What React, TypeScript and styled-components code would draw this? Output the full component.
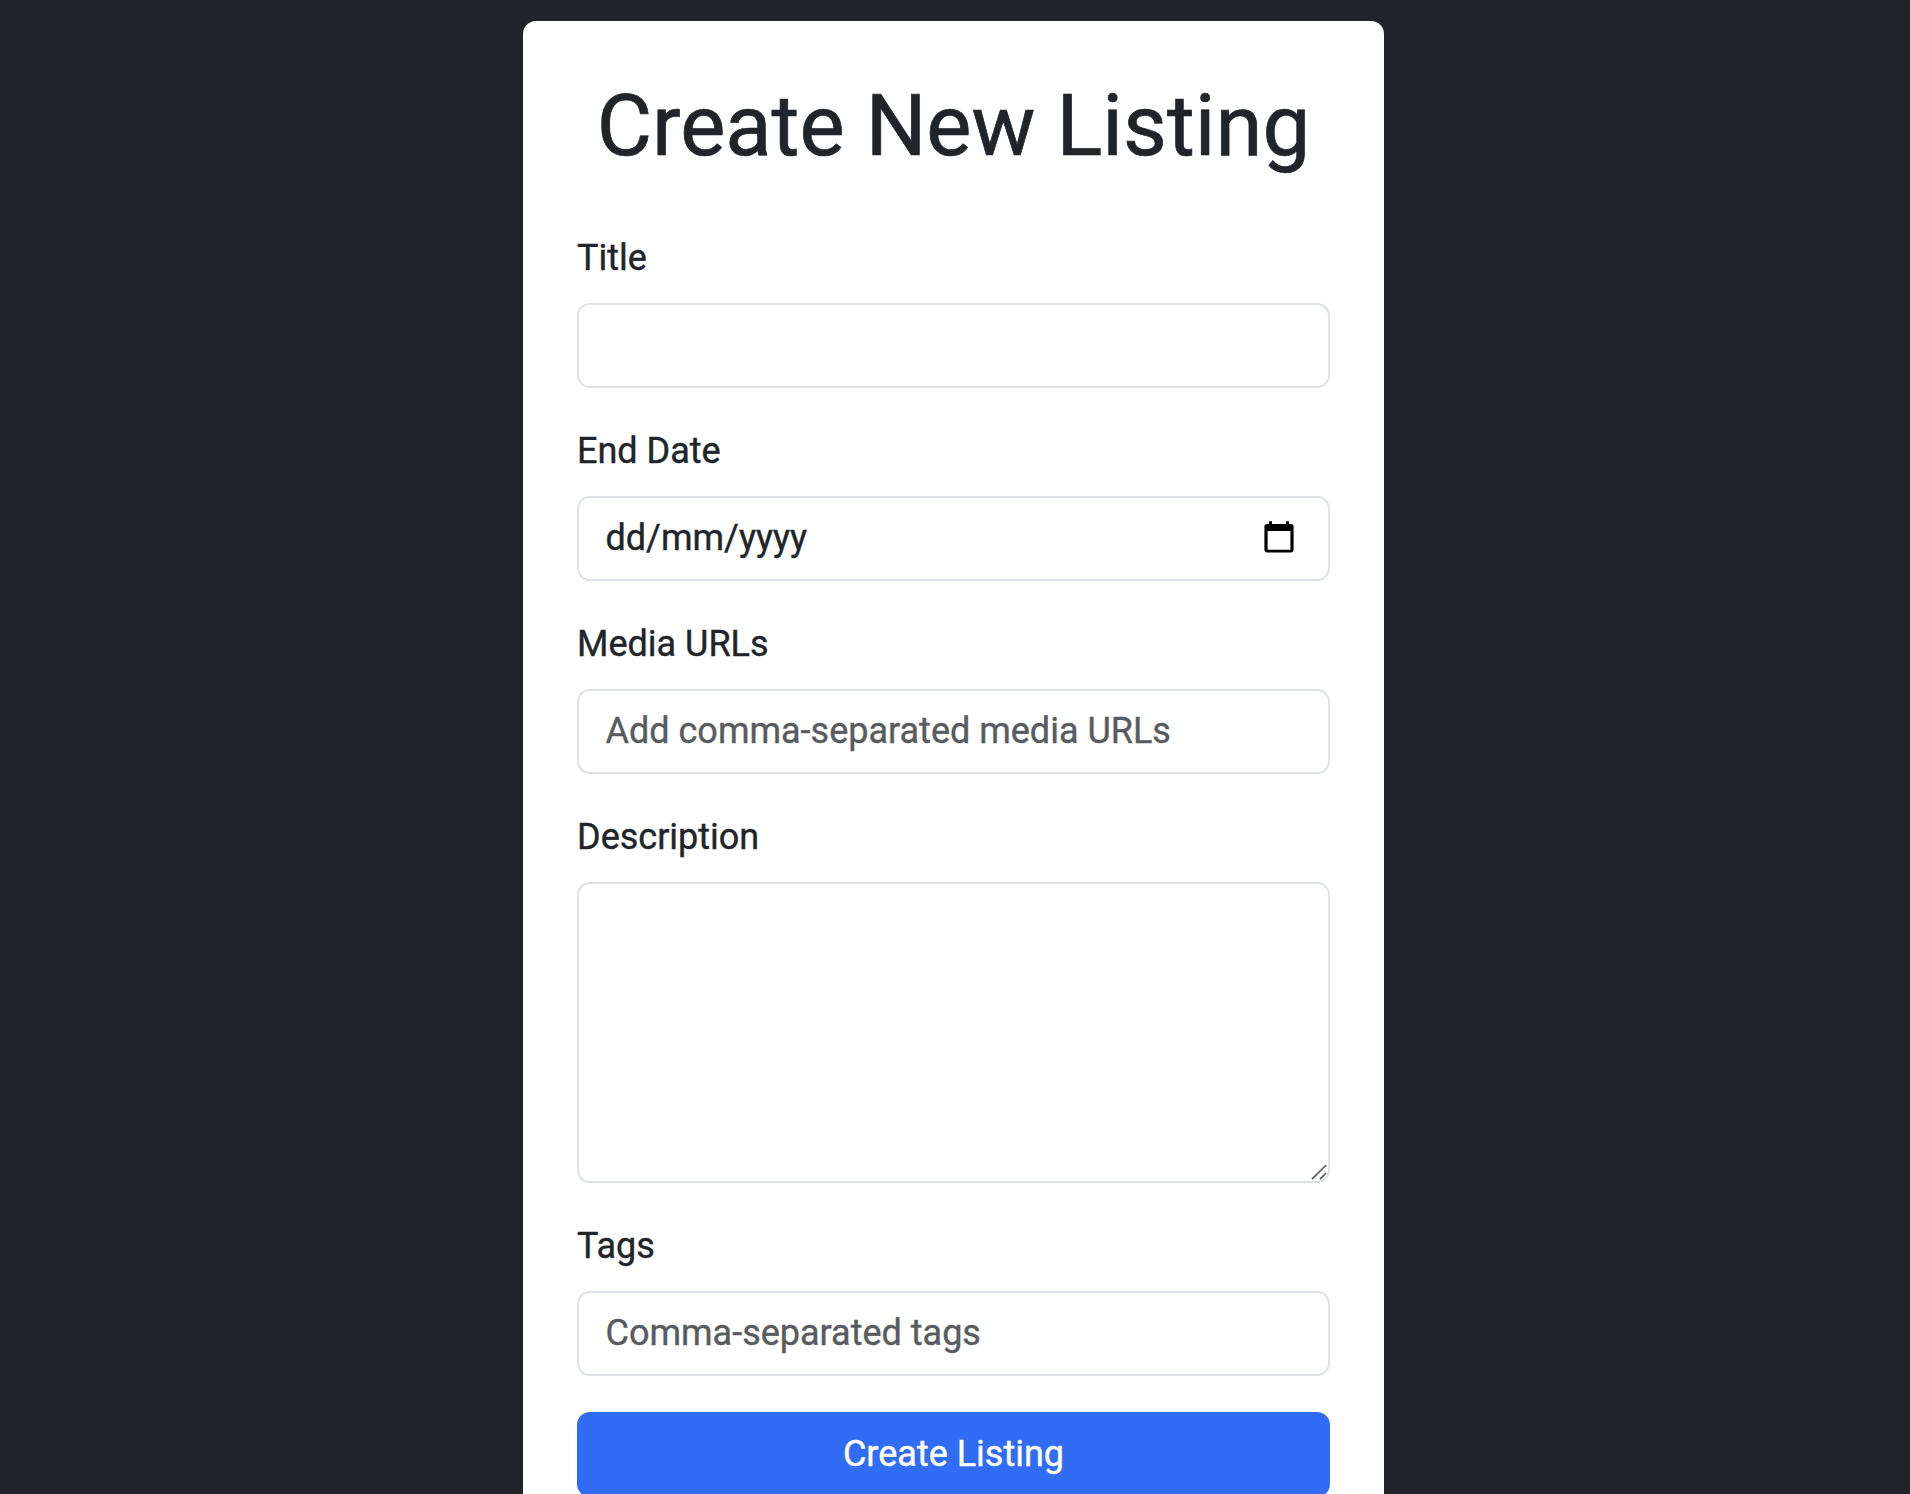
import React from "react";
import styled, { createGlobalStyle } from "styled-components";

const GlobalStyle = createGlobalStyle`
  *, *::before, *::after { box-sizing: border-box; }
  body {
    margin: 0;
    height: 1494px;
    overflow: hidden;
    background: #212529;
    color: #212529;
    font-family: Roboto, "Liberation Sans", sans-serif;
    font-size: 36px;
    line-height: 54px;
    -webkit-text-stroke: 0.4px;
  }
`;

const Page = styled.main`
  display: flex;
  justify-content: center;
  align-items: flex-start;
  padding-top: 21px;
  height: 1494px;
  overflow: hidden;
`;

const Card = styled.form`
  display: flex;
  flex-direction: column;
  width: 861px;
  height: 1560px;
  margin-right: 3px;
  padding: 54px 54px 0;
  background: #fff;
  border-radius: 13px;
`;

const Heading = styled.h1`
  margin: 0 0 54px;
  font-size: 85.1px;
  font-weight: 400;
  line-height: 102px;
  text-align: center;
  white-space: nowrap;
  -webkit-text-stroke: 0.7px;
`;

const Field = styled.div`
  display: flex;
  flex-direction: column;
  gap: 18px;
  margin-bottom: 36px;
`;

const Label = styled.label`
  line-height: 54px;
`;

const DateControl = styled.div`
  display: flex;
  align-items: flex-start;
  justify-content: space-between;
  height: 85px;
  padding: 13px 34px 14px 26.5px;
  border: 2px solid #dee2e6;
  border-radius: 13px;
`;

const CalendarIcon = styled.svg`
  width: 30px;
  height: 32px;
  margin-top: 10px;
`;

const Input = styled.input`
  height: 85px;
  padding: 13px 26.5px 14px;
  border: 2px solid #dee2e6;
  border-radius: 13px;
  color: #212529;
  font: inherit;
  -webkit-text-stroke: inherit;
  &::placeholder { color: #595c5f; opacity: 1; }
`;

const TextArea = styled.div`
  display: flex;
  align-items: flex-end;
  justify-content: flex-end;
  height: 301px;
  border: 2px solid #dee2e6;
  border-radius: 13px;
`;

const Submit = styled.button`
  height: 85px;
  padding: 15px 27px 16px;
  border: 0;
  border-radius: 13px;
  background: #316cf4;
  color: #fff;
  font: inherit;
  -webkit-text-stroke: inherit;
`;

export default function App() {
  return (
    <>
      <GlobalStyle />
      <Page>
        <Card>
          <Heading>Create New Listing</Heading>
          <Field>
            <Label htmlFor="title">Title</Label>
            <Input id="title" />
          </Field>
          <Field>
            <Label>End Date</Label>
            <DateControl>
              <span>dd/mm/yyyy</span>
              <CalendarIcon viewBox="0 0 30 32">
                <path
                  fillRule="evenodd"
                  d="M5 .3h3V3h14V.3h3V3h1.8a2.8 2.8 0 0 1 2.8 2.8v22.8a2.8 2.8 0 0 1-2.8 2.8H3.2a2.8 2.8 0 0 1-2.8-2.8V5.8A2.8 2.8 0 0 1 3.2 3H5zM3.6 10v18.7h22.8V10z"
                />
              </CalendarIcon>
            </DateControl>
          </Field>
          <Field>
            <Label htmlFor="media">Media URLs</Label>
            <Input id="media" placeholder="Add comma-separated media URLs" />
          </Field>
          <Field>
            <Label>Description</Label>
            <TextArea>
              <svg width="18" height="18" viewBox="0 0 18 18" stroke="#5c5c5c" strokeWidth="1.7">
                <path d="M2 16.2L16.2 2M10 16.2L16.2 10" />
              </svg>
            </TextArea>
          </Field>
          <Field>
            <Label htmlFor="tags">Tags</Label>
            <Input id="tags" placeholder="Comma-separated tags" />
          </Field>
          <Submit type="button">Create Listing</Submit>
        </Card>
      </Page>
    </>
  );
}
